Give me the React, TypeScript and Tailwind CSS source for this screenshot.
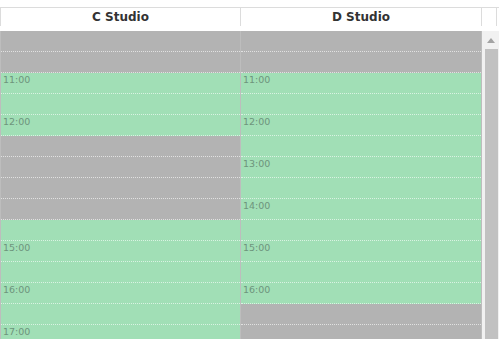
import React from "react";

type Slot = { open: boolean; label?: string };

const SLOT_LABELS = ["", "", "11:00", "", "12:00", "", "13:00", "", "14:00", "", "15:00", "", "16:00", "", "17:00", ""];

function makeSlots(openFn: (i: number) => boolean): Slot[] {
  return SLOT_LABELS.map((l, i) => ({ open: openFn(i), label: l || undefined }));
}

const cSlots = makeSlots((i) => (i >= 2 && i <= 4) || i >= 9);
const dSlots = makeSlots((i) => i >= 2 && i <= 12);

function Column({ slots, left }: { slots: Slot[]; left?: boolean }) {
  return (
    <div
      className={
        "flex flex-col w-[241px] shrink-0 border-r border-[#bdbdbd] " +
        (left ? "border-l" : "")
      }
    >
      {slots.map((s, i) => (
        <div
          key={i}
          className={
            "h-[21px] shrink-0 border-b border-dotted border-white/60 " +
            (s.open ? "bg-[#a1dfb6]" : "bg-[#b3b3b3]")
          }
        >
          {s.open && s.label ? (
            <div className="pl-[2px] pt-[1px] text-[9.5px] leading-[12px] text-[#6e947c]">
              {s.label}
            </div>
          ) : null}
        </div>
      ))}
    </div>
  );
}

export default function App() {
  return (
    <div
      className="w-[499px] h-[339px] overflow-hidden bg-white pt-[7px]"
      style={{ fontFamily: '"DejaVu Sans", Verdana, sans-serif' }}
    >
      <div className="flex h-[19px] border-t border-[#dcdcdc]">
        <div className="w-[241px] shrink-0 border-l border-r border-[#dcdcdc] flex items-center justify-center text-[12px] font-bold text-[#333]">
          C Studio
        </div>
        <div className="w-[241px] shrink-0 border-r border-[#dcdcdc] flex items-center justify-center text-[12px] font-bold text-[#333]">
          D Studio
        </div>
        <div className="w-[15px] shrink-0 border-r border-[#dcdcdc]" />
      </div>
      <div className="h-[5px]" />
      <div className="flex">
        <Column slots={cSlots} left />
        <Column slots={dSlots} />
        <div className="w-[17px] shrink-0 bg-[#f1f1f1] flex flex-col items-center pl-[1px]">
          <div className="h-[18px] flex items-center justify-center">
            <svg width="8" height="5" viewBox="0 0 8 5">
              <polygon points="4,0 8,5 0,5" fill="#a3a3a3" />
            </svg>
          </div>
          <div className="w-[13px] h-[300px] bg-[#c1c1c1]" />
        </div>
      </div>
    </div>
  );
}
